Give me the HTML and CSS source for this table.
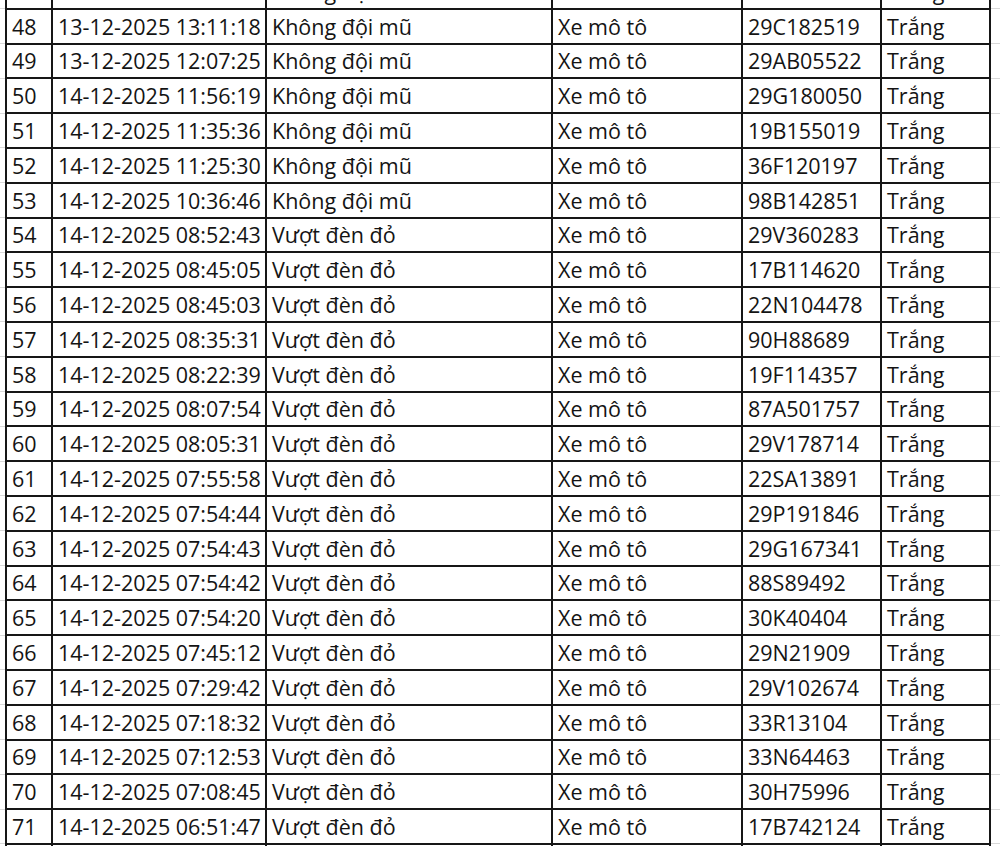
FILE: index.html
```html
<!DOCTYPE html>
<html lang="vi">
<head>
<meta charset="utf-8">
<title>Danh sách vi phạm</title>
<link rel="stylesheet" href="styles.css">
</head>
<body>
<div class="sheet">
<table class="grid">
<colgroup>
<col class="c-gut"><col class="c-no"><col class="c-time"><col class="c-err"><col class="c-veh"><col class="c-plate"><col class="c-color"><col class="c-end">
</colgroup>
<tbody>
<tr><td class="gut"></td><td>47</td><td>13-12-2025 13:40:21</td><td>Không đội mũ</td><td>Xe mô tô</td><td>29H153086</td><td>Trắng</td><td class="gut"></td></tr>
<tr><td class="gut"></td><td>48</td><td>13-12-2025 13:11:18</td><td>Không đội mũ</td><td>Xe mô tô</td><td>29C182519</td><td>Trắng</td><td class="gut"></td></tr>
<tr><td class="gut"></td><td>49</td><td>13-12-2025 12:07:25</td><td>Không đội mũ</td><td>Xe mô tô</td><td>29AB05522</td><td>Trắng</td><td class="gut"></td></tr>
<tr><td class="gut"></td><td>50</td><td>14-12-2025 11:56:19</td><td>Không đội mũ</td><td>Xe mô tô</td><td>29G180050</td><td>Trắng</td><td class="gut"></td></tr>
<tr><td class="gut"></td><td>51</td><td>14-12-2025 11:35:36</td><td>Không đội mũ</td><td>Xe mô tô</td><td>19B155019</td><td>Trắng</td><td class="gut"></td></tr>
<tr><td class="gut"></td><td>52</td><td>14-12-2025 11:25:30</td><td>Không đội mũ</td><td>Xe mô tô</td><td>36F120197</td><td>Trắng</td><td class="gut"></td></tr>
<tr><td class="gut"></td><td>53</td><td>14-12-2025 10:36:46</td><td>Không đội mũ</td><td>Xe mô tô</td><td>98B142851</td><td>Trắng</td><td class="gut"></td></tr>
<tr><td class="gut"></td><td>54</td><td>14-12-2025 08:52:43</td><td>Vượt đèn đỏ</td><td>Xe mô tô</td><td>29V360283</td><td>Trắng</td><td class="gut"></td></tr>
<tr><td class="gut"></td><td>55</td><td>14-12-2025 08:45:05</td><td>Vượt đèn đỏ</td><td>Xe mô tô</td><td>17B114620</td><td>Trắng</td><td class="gut"></td></tr>
<tr><td class="gut"></td><td>56</td><td>14-12-2025 08:45:03</td><td>Vượt đèn đỏ</td><td>Xe mô tô</td><td>22N104478</td><td>Trắng</td><td class="gut"></td></tr>
<tr><td class="gut"></td><td>57</td><td>14-12-2025 08:35:31</td><td>Vượt đèn đỏ</td><td>Xe mô tô</td><td>90H88689</td><td>Trắng</td><td class="gut"></td></tr>
<tr><td class="gut"></td><td>58</td><td>14-12-2025 08:22:39</td><td>Vượt đèn đỏ</td><td>Xe mô tô</td><td>19F114357</td><td>Trắng</td><td class="gut"></td></tr>
<tr><td class="gut"></td><td>59</td><td>14-12-2025 08:07:54</td><td>Vượt đèn đỏ</td><td>Xe mô tô</td><td>87A501757</td><td>Trắng</td><td class="gut"></td></tr>
<tr><td class="gut"></td><td>60</td><td>14-12-2025 08:05:31</td><td>Vượt đèn đỏ</td><td>Xe mô tô</td><td>29V178714</td><td>Trắng</td><td class="gut"></td></tr>
<tr><td class="gut"></td><td>61</td><td>14-12-2025 07:55:58</td><td>Vượt đèn đỏ</td><td>Xe mô tô</td><td>22SA13891</td><td>Trắng</td><td class="gut"></td></tr>
<tr><td class="gut"></td><td>62</td><td>14-12-2025 07:54:44</td><td>Vượt đèn đỏ</td><td>Xe mô tô</td><td>29P191846</td><td>Trắng</td><td class="gut"></td></tr>
<tr><td class="gut"></td><td>63</td><td>14-12-2025 07:54:43</td><td>Vượt đèn đỏ</td><td>Xe mô tô</td><td>29G167341</td><td>Trắng</td><td class="gut"></td></tr>
<tr><td class="gut"></td><td>64</td><td>14-12-2025 07:54:42</td><td>Vượt đèn đỏ</td><td>Xe mô tô</td><td>88S89492</td><td>Trắng</td><td class="gut"></td></tr>
<tr><td class="gut"></td><td>65</td><td>14-12-2025 07:54:20</td><td>Vượt đèn đỏ</td><td>Xe mô tô</td><td>30K40404</td><td>Trắng</td><td class="gut"></td></tr>
<tr><td class="gut"></td><td>66</td><td>14-12-2025 07:45:12</td><td>Vượt đèn đỏ</td><td>Xe mô tô</td><td>29N21909</td><td>Trắng</td><td class="gut"></td></tr>
<tr><td class="gut"></td><td>67</td><td>14-12-2025 07:29:42</td><td>Vượt đèn đỏ</td><td>Xe mô tô</td><td>29V102674</td><td>Trắng</td><td class="gut"></td></tr>
<tr><td class="gut"></td><td>68</td><td>14-12-2025 07:18:32</td><td>Vượt đèn đỏ</td><td>Xe mô tô</td><td>33R13104</td><td>Trắng</td><td class="gut"></td></tr>
<tr><td class="gut"></td><td>69</td><td>14-12-2025 07:12:53</td><td>Vượt đèn đỏ</td><td>Xe mô tô</td><td>33N64463</td><td>Trắng</td><td class="gut"></td></tr>
<tr><td class="gut"></td><td>70</td><td>14-12-2025 07:08:45</td><td>Vượt đèn đỏ</td><td>Xe mô tô</td><td>30H75996</td><td>Trắng</td><td class="gut"></td></tr>
<tr><td class="gut"></td><td>71</td><td>14-12-2025 06:51:47</td><td>Vượt đèn đỏ</td><td>Xe mô tô</td><td>17B742124</td><td>Trắng</td><td class="gut"></td></tr>
<tr><td class="gut"></td><td></td><td></td><td></td><td></td><td></td><td></td><td class="gut"></td></tr>
</tbody>
</table>
</div>
</body>
</html>
```

FILE: styles.css
```css
html, body {
  margin: 0;
  padding: 0;
  background: #ffffff;
  overflow: hidden;
}

.sheet {
  width: 1000px;
  height: 846px;
  overflow: hidden;
}

.grid {
  border-collapse: collapse;
  table-layout: fixed;
  width: 1001px;
  margin-top: -27px;
  font-family: "Open Sans", "Noto Sans", sans-serif;
  font-size: 21.5px;
  color: #141414;
}

.c-gut { width: 6px; }
.c-no { width: 46px; }
.c-time { width: 214px; }
.c-err { width: 286px; }
.c-veh { width: 190px; }
.c-plate { width: 139px; }
.c-color { width: 109px; }
.c-end { width: 11px; }

.grid tr {
  height: 34.8px;
}

.grid td {
  border: 2px solid #161616;
  padding: 0 0 1px 5px;
  white-space: nowrap;
  overflow: hidden;
  vertical-align: bottom;
  line-height: 30px;
}

.grid td.gut {
  border-top: 1px solid #d8d8d8;
  border-bottom: 1px solid #d8d8d8;
  border-left: none;
  border-right: none;
  padding: 0;
}
```
